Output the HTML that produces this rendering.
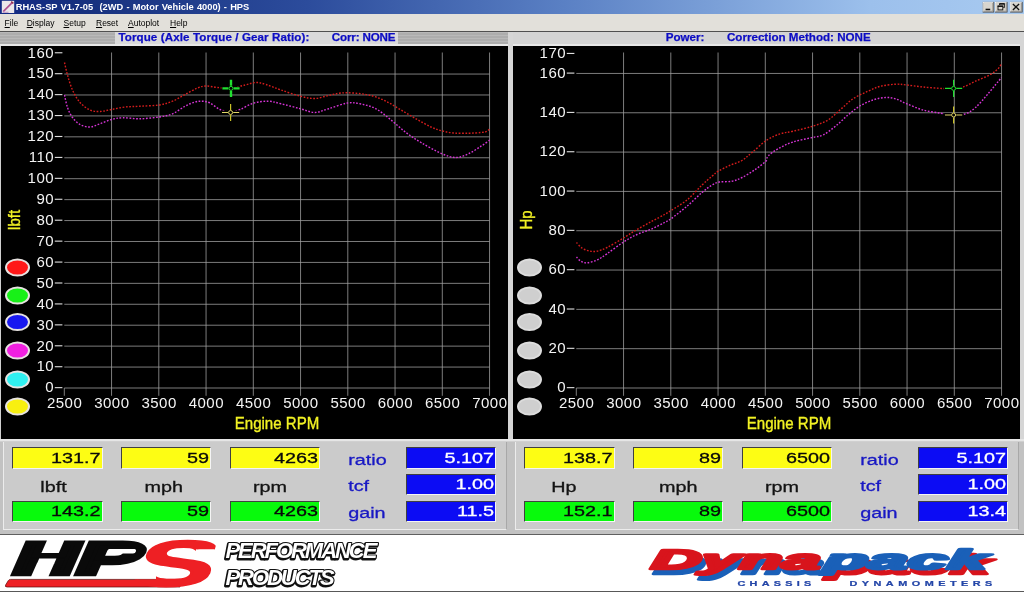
<!DOCTYPE html>
<html lang="en">
<head>
<meta charset="utf-8">
<title>RHAS-SP V1.7-05 (2WD - Motor Vehicle 4000) - HPS</title>
<style>
html,body{margin:0;padding:0}
body{will-change:transform;width:1024px;height:592px;position:relative;overflow:hidden;background:#d0d0d0;font-family:"Liberation Sans",sans-serif}
.abs{position:absolute}
#title{left:0;top:0;width:1024px;height:14px;background:linear-gradient(90deg,#122a84 0%,#16307e 8%,#2c4c9c 30%,#5a80c4 55%,#9cc0ec 85%,#a8caf0 100%)}
#title .t{position:absolute;left:15.7px;top:0;height:14px;line-height:14px;color:#fff;font-weight:bold;font-size:9.3px;white-space:pre;word-spacing:0.6px}
#menu{left:0;top:14px;width:1024px;height:17px;background:#e2e0da}
#menu span{position:absolute;top:1.5px;line-height:15px;font-size:8.5px;color:#000;white-space:pre}
#menu u{text-decoration:underline}
.hdr{top:32px;height:12.3px;background:repeating-linear-gradient(180deg,#b9b9b9 0,#b9b9b9 1.5px,#adadad 1.5px,#adadad 3px)}
.hl{top:32px;height:12.3px;background:#dadada;color:#0c0cc4;-webkit-text-stroke:0.25px #0c0cc4;font-weight:bold;font-size:11.6px;line-height:12.5px;white-space:pre}
.bx{position:absolute;box-sizing:border-box;border-top:1.2px solid #404040;border-left:1.2px solid #404040;border-bottom:1px solid #f4f4f4;border-right:1px solid #f4f4f4;}
.yl{background:#fdfd14}
.gr{background:#08fa0c}
.bl{background:#0c0cf4}
svg text{font-family:"Liberation Sans",sans-serif}
</style>
</head>
<body>
<div id="title" class="abs"><svg class="abs" style="left:0;top:0" width="16" height="14" viewBox="0 0 16 14"><rect x="1.8" y="0.8" width="12.4" height="12.2" fill="#ece8ea"/><path d="M3.2 11.6L12.4 2.4" stroke="#b05090" stroke-width="1.6"/><path d="M2.6 12.3H8.5" stroke="#c0a0c8" stroke-width="1.2"/><path d="M11.2 1.6L13.4 3.4" stroke="#903050" stroke-width="1.4"/></svg><div class="t">RHAS-SP V1.7-05  (2WD - Motor Vehicle 4000) - HPS</div>
<svg class="abs" style="left:980px;top:0" width="44" height="14" viewBox="980 0 44 14">
<g><rect x="982.7" y="1.9" width="11.5" height="10.6" fill="#404040"/><rect x="982.7" y="1.9" width="10.6" height="9.7" fill="#fff"/><rect x="983.5" y="2.7" width="9.8" height="8.9" fill="#86847e"/><rect x="983.5" y="2.7" width="9" height="8.1" fill="#d8d5ce"/><rect x="985.6" y="8.7" width="4.6" height="1.5" fill="#111"/></g>
<g><rect x="995" y="1.9" width="12.5" height="10.6" fill="#404040"/><rect x="995" y="1.9" width="11.6" height="9.7" fill="#fff"/><rect x="995.8" y="2.7" width="10.8" height="8.9" fill="#86847e"/><rect x="995.8" y="2.7" width="10" height="8.1" fill="#d8d5ce"/><path d="M999.6 5V3.6H1004.4V7.6H1003.2" fill="none" stroke="#111" stroke-width="0.9"/><path d="M999.4 4H1004.6" stroke="#111" stroke-width="1.3"/><rect x="998" y="6" width="4.8" height="3.9" fill="none" stroke="#111" stroke-width="0.9"/><path d="M997.6 6.3H1003.2" stroke="#111" stroke-width="1.3"/></g>
<g><rect x="1010.1" y="1.9" width="12.5" height="10.6" fill="#404040"/><rect x="1010.1" y="1.9" width="11.6" height="9.7" fill="#fff"/><rect x="1010.9" y="2.7" width="10.8" height="8.9" fill="#86847e"/><rect x="1010.9" y="2.7" width="10" height="8.1" fill="#d8d5ce"/><path d="M1012.9 3.9L1019.1 9.9M1019.1 3.9L1012.9 9.9" stroke="#111" stroke-width="1.35" fill="none"/></g>
</svg>
</div>
<div id="menu" class="abs"><span style="left:4.6px"><u>F</u>ile</span><span style="left:26.7px"><u>D</u>isplay</span><span style="left:63.5px"><u>S</u>etup</span><span style="left:96px"><u>R</u>eset</span><span style="left:128px"><u>A</u>utoplot</span><span style="left:170px"><u>H</u>elp</span></div>
<div class="abs" style="left:0;top:31px;width:1024px;height:1px;background:#505050"></div>
<div class="abs hdr" style="left:0;width:510px"></div>
<div class="abs hdr" style="left:512px;width:512px;background:#d4d4d4"></div>
<div class="abs hl" style="left:115px;width:283px"><span class="abs" style="left:3.4px;top:-1px;letter-spacing:0.1px">Torque (Axle Torque / Gear Ratio):</span><span class="abs" style="left:216.75px;top:-1px;letter-spacing:-0.15px">Corr: NONE</span></div>
<div class="abs hl" style="left:600px;width:340px;background:none"><span class="abs" style="left:65.75px;top:-1px">Power:</span><span class="abs" style="left:127px;top:-1px">Correction Method: NONE</span></div>
<div class="abs" style="left:0;top:44.3px;width:1024px;height:2px;background:#e8e8e8"></div>
<div class="abs" style="left:1.3px;top:45.9px;width:506.5px;height:393px;background:#000"></div>
<div class="abs" style="left:512.7px;top:45.9px;width:507.1px;height:393px;background:#000"></div>
<div class="abs" style="left:507.8px;top:32px;width:4.9px;height:407px;background:#d6d6d6"></div><div class="abs" style="left:1019.8px;top:32px;width:4.2px;height:407px;background:#d6d6d6"></div><div class="abs" style="left:0;top:438.9px;width:1024px;height:2.6px;background:#e6e6e6"></div>
<svg class="abs" style="left:0;top:0" width="1024" height="592" viewBox="0 0 1024 592"><g stroke="#a0a0a0" stroke-width="0.78"><line x1="64.30" y1="388" x2="64.30" y2="395.8" /><line x1="111.55" y1="52.5" x2="111.55" y2="395.8" /><line x1="158.80" y1="52.5" x2="158.80" y2="395.8" /><line x1="206.05" y1="52.5" x2="206.05" y2="395.8" /><line x1="253.30" y1="52.5" x2="253.30" y2="395.8" /><line x1="300.55" y1="52.5" x2="300.55" y2="395.8" /><line x1="347.80" y1="52.5" x2="347.80" y2="395.8" /><line x1="395.05" y1="52.5" x2="395.05" y2="395.8" /><line x1="442.30" y1="52.5" x2="442.30" y2="395.8" /><line x1="489.55" y1="52.5" x2="489.55" y2="395.8" /><line x1="64.30" y1="388.00" x2="489.55" y2="388.00" /><line x1="64.30" y1="367.07" x2="489.55" y2="367.07" /><line x1="64.30" y1="346.14" x2="489.55" y2="346.14" /><line x1="64.30" y1="325.21" x2="489.55" y2="325.21" /><line x1="64.30" y1="304.28" x2="489.55" y2="304.28" /><line x1="64.30" y1="283.35" x2="489.55" y2="283.35" /><line x1="64.30" y1="262.42" x2="489.55" y2="262.42" /><line x1="64.30" y1="241.49" x2="489.55" y2="241.49" /><line x1="64.30" y1="220.56" x2="489.55" y2="220.56" /><line x1="64.30" y1="199.63" x2="489.55" y2="199.63" /><line x1="64.30" y1="178.70" x2="489.55" y2="178.70" /><line x1="64.30" y1="157.77" x2="489.55" y2="157.77" /><line x1="64.30" y1="136.84" x2="489.55" y2="136.84" /><line x1="64.30" y1="115.91" x2="489.55" y2="115.91" /><line x1="64.30" y1="94.98" x2="489.55" y2="94.98" /><line x1="64.30" y1="74.05" x2="489.55" y2="74.05" /></g><g fill="#f4f4f4" font-size="15px" letter-spacing="0.5px"><text x="54.1" y="392.40" text-anchor="end">0</text><rect x="54.8" y="387.10" width="7.6" height="1.1" fill="#e0e0e0"/><text x="54.1" y="371.47" text-anchor="end">10</text><rect x="54.8" y="366.17" width="7.6" height="1.1" fill="#e0e0e0"/><text x="54.1" y="350.54" text-anchor="end">20</text><rect x="54.8" y="345.24" width="7.6" height="1.1" fill="#e0e0e0"/><text x="54.1" y="329.61" text-anchor="end">30</text><rect x="54.8" y="324.31" width="7.6" height="1.1" fill="#e0e0e0"/><text x="54.1" y="308.68" text-anchor="end">40</text><rect x="54.8" y="303.38" width="7.6" height="1.1" fill="#e0e0e0"/><text x="54.1" y="287.75" text-anchor="end">50</text><rect x="54.8" y="282.45" width="7.6" height="1.1" fill="#e0e0e0"/><text x="54.1" y="266.82" text-anchor="end">60</text><rect x="54.8" y="261.52" width="7.6" height="1.1" fill="#e0e0e0"/><text x="54.1" y="245.89" text-anchor="end">70</text><rect x="54.8" y="240.59" width="7.6" height="1.1" fill="#e0e0e0"/><text x="54.1" y="224.96" text-anchor="end">80</text><rect x="54.8" y="219.66" width="7.6" height="1.1" fill="#e0e0e0"/><text x="54.1" y="204.03" text-anchor="end">90</text><rect x="54.8" y="198.73" width="7.6" height="1.1" fill="#e0e0e0"/><text x="54.1" y="183.10" text-anchor="end">100</text><rect x="54.8" y="177.80" width="7.6" height="1.1" fill="#e0e0e0"/><text x="54.1" y="162.17" text-anchor="end">110</text><rect x="54.8" y="156.87" width="7.6" height="1.1" fill="#e0e0e0"/><text x="54.1" y="141.24" text-anchor="end">120</text><rect x="54.8" y="135.94" width="7.6" height="1.1" fill="#e0e0e0"/><text x="54.1" y="120.31" text-anchor="end">130</text><rect x="54.8" y="115.01" width="7.6" height="1.1" fill="#e0e0e0"/><text x="54.1" y="99.38" text-anchor="end">140</text><rect x="54.8" y="94.08" width="7.6" height="1.1" fill="#e0e0e0"/><text x="54.1" y="78.45" text-anchor="end">150</text><rect x="54.8" y="73.15" width="7.6" height="1.1" fill="#e0e0e0"/><text x="54.1" y="57.52" text-anchor="end">160</text><rect x="54.8" y="52.22" width="7.6" height="1.1" fill="#e0e0e0"/><text x="64.60" y="407.8" text-anchor="middle">2500</text><text x="111.85" y="407.8" text-anchor="middle">3000</text><text x="159.10" y="407.8" text-anchor="middle">3500</text><text x="206.35" y="407.8" text-anchor="middle">4000</text><text x="253.60" y="407.8" text-anchor="middle">4500</text><text x="300.85" y="407.8" text-anchor="middle">5000</text><text x="348.10" y="407.8" text-anchor="middle">5500</text><text x="395.35" y="407.8" text-anchor="middle">6000</text><text x="442.60" y="407.8" text-anchor="middle">6500</text><text x="489.85" y="407.8" text-anchor="middle">7000</text></g><text transform="translate(277 429) scale(0.925 1)" text-anchor="middle" fill="#f2f224" stroke="#f2f224" stroke-width="0.35" font-size="16.3px">Engine RPM</text><text transform="translate(20.2 219.9) rotate(-90) scale(0.92 1)" text-anchor="middle" fill="#f2f224" stroke="#f2f224" stroke-width="0.35" font-size="16.3px">lbft</text><path d="M64.5 62.5C65.0 64.6 66.2 70.4 67.5 75.0C68.8 79.6 70.4 85.4 72.5 90.0C74.6 94.6 77.1 99.2 80.0 102.5C82.9 105.8 86.7 108.5 90.0 110.0C93.3 111.5 96.4 111.6 100.0 111.5C103.6 111.4 107.3 110.2 111.5 109.5C115.7 108.8 120.2 107.5 125.0 107.0C129.8 106.5 134.3 106.6 140.0 106.2C145.7 105.9 153.6 105.8 159.0 105.0C164.4 104.2 168.2 103.0 172.5 101.2C176.8 99.5 180.8 96.7 185.0 94.5C189.2 92.3 194.0 89.4 197.5 88.0C201.0 86.6 202.7 86.1 206.0 86.0C209.3 85.9 213.4 87.1 217.5 87.5C221.6 87.9 226.2 88.7 230.8 88.2C235.3 87.8 240.8 86.0 245.0 85.0C249.2 84.0 252.5 82.6 256.0 82.5C259.5 82.4 261.8 83.2 266.0 84.5C270.2 85.8 275.2 88.0 281.0 90.0C286.8 92.0 294.9 94.8 300.5 96.2C306.1 97.7 310.1 98.6 314.8 98.5C319.4 98.4 324.1 96.4 328.5 95.5C332.9 94.6 336.4 93.4 341.0 93.0C345.6 92.6 351.0 92.8 356.0 93.2C361.0 93.7 366.0 94.2 371.0 95.5C376.0 96.8 381.0 98.8 386.0 101.2C391.0 103.7 396.0 107.1 401.0 110.0C406.0 112.9 411.0 115.9 416.0 118.8C421.0 121.6 426.7 125.0 431.0 127.0C435.3 129.0 438.0 129.8 441.8 130.8C445.5 131.8 449.0 132.6 453.5 133.0C458.0 133.4 463.9 133.3 468.5 133.2C473.1 133.2 477.9 132.8 481.0 132.5C484.1 132.2 485.8 132.0 487.2 131.2C488.8 130.5 489.5 128.5 490.0 128.0" fill="none" stroke="#d41c1c" stroke-width="1.4" stroke-dasharray="1.7 1.6"/><path d="M64.5 95.0C65.0 97.1 66.2 103.8 67.5 107.5C68.8 111.2 70.4 114.7 72.5 117.5C74.6 120.3 77.1 122.9 80.0 124.5C82.9 126.1 86.7 127.1 90.0 127.0C93.3 126.9 96.4 125.0 100.0 123.8C103.6 122.5 107.8 120.5 111.5 119.5C115.2 118.5 117.8 117.9 122.5 117.8C127.2 117.6 133.9 118.9 140.0 118.8C146.1 118.6 153.6 117.8 159.0 117.0C164.4 116.2 168.2 115.5 172.5 113.8C176.8 112.0 181.2 108.2 185.0 106.2C188.8 104.3 192.1 102.8 195.0 102.0C197.9 101.2 200.0 101.1 202.5 101.2C205.0 101.4 207.1 101.6 210.0 103.0C212.9 104.4 216.5 108.0 220.0 109.5C223.5 111.0 227.4 112.0 230.8 112.0C234.1 112.0 236.1 111.0 240.0 109.5C243.9 108.0 249.2 104.4 254.0 103.0C258.8 101.6 264.0 101.1 268.5 101.2C273.0 101.4 275.7 102.5 281.0 103.8C286.3 105.0 294.9 107.3 300.5 108.8C306.1 110.2 310.1 112.5 314.8 112.5C319.4 112.5 323.0 110.3 328.5 108.8C334.0 107.2 342.1 103.8 347.5 103.0C352.9 102.2 356.2 103.0 361.0 104.0C365.8 105.0 371.0 106.1 376.0 108.8C381.0 111.4 386.0 116.0 391.0 120.0C396.0 124.0 401.0 128.8 406.0 132.5C411.0 136.2 415.0 139.0 421.0 142.5C427.0 146.0 435.9 151.2 441.8 153.8C447.6 156.2 451.5 157.5 456.0 157.5C460.5 157.5 464.3 155.6 468.5 153.8C472.7 151.9 477.4 148.5 481.0 146.2C484.6 144.0 488.5 141.0 490.0 140.0" fill="none" stroke="#d634d6" stroke-width="1.4" stroke-dasharray="1.7 1.6"/><rect x="221.5" y="86.4" width="19" height="4" fill="#000"/><g stroke="#20e030" stroke-width="2.4" fill="none"><path d="M222.4 88.4H228.4M233.6 88.4H239.6"/><path stroke="#20e030" d="M231 79.80000000000001V85.80000000000001M231 91.0V97.0"/><circle cx="231" cy="88.4" r="2" stroke-width="1"/></g><rect x="221.1" y="110.5" width="19" height="4" fill="#000"/><g stroke="#e0d468" stroke-width="1.2" fill="none"><path d="M222.0 112.5H228.0M233.2 112.5H239.2"/><path stroke="#c8c028" d="M230.6 103.9V109.9M230.6 115.1V121.1"/><circle cx="230.6" cy="112.5" r="2" stroke-width="1"/></g><ellipse cx="17.5" cy="267.5" rx="11.5" ry="8.1" fill="#ff1818" stroke="#e6e2e0" stroke-width="2"/><ellipse cx="17.5" cy="295.5" rx="11.5" ry="8.1" fill="#18f018" stroke="#e6e2e0" stroke-width="2"/><ellipse cx="17.5" cy="322" rx="11.5" ry="8.1" fill="#1818f0" stroke="#e6e2e0" stroke-width="2"/><ellipse cx="17.5" cy="350.5" rx="11.5" ry="8.1" fill="#f020e0" stroke="#e6e2e0" stroke-width="2"/><ellipse cx="17.5" cy="379.5" rx="11.5" ry="8.1" fill="#30f0f0" stroke="#e6e2e0" stroke-width="2"/><ellipse cx="17.5" cy="406.5" rx="11.5" ry="8.1" fill="#f8f010" stroke="#e6e2e0" stroke-width="2"/><g stroke="#a0a0a0" stroke-width="0.78"><line x1="576.30" y1="388" x2="576.30" y2="395.8" /><line x1="623.55" y1="52.5" x2="623.55" y2="395.8" /><line x1="670.80" y1="52.5" x2="670.80" y2="395.8" /><line x1="718.05" y1="52.5" x2="718.05" y2="395.8" /><line x1="765.30" y1="52.5" x2="765.30" y2="395.8" /><line x1="812.55" y1="52.5" x2="812.55" y2="395.8" /><line x1="859.80" y1="52.5" x2="859.80" y2="395.8" /><line x1="907.05" y1="52.5" x2="907.05" y2="395.8" /><line x1="954.30" y1="52.5" x2="954.30" y2="395.8" /><line x1="1001.55" y1="52.5" x2="1001.55" y2="395.8" /><line x1="576.30" y1="388.00" x2="1001.55" y2="388.00" /><line x1="576.30" y1="348.68" x2="1001.55" y2="348.68" /><line x1="576.30" y1="309.36" x2="1001.55" y2="309.36" /><line x1="576.30" y1="270.04" x2="1001.55" y2="270.04" /><line x1="576.30" y1="230.72" x2="1001.55" y2="230.72" /><line x1="576.30" y1="191.41" x2="1001.55" y2="191.41" /><line x1="576.30" y1="152.09" x2="1001.55" y2="152.09" /><line x1="576.30" y1="112.77" x2="1001.55" y2="112.77" /><line x1="576.30" y1="73.45" x2="1001.55" y2="73.45" /></g><g fill="#f4f4f4" font-size="15px" letter-spacing="0.5px"><text x="566.1" y="392.40" text-anchor="end">0</text><rect x="566.8" y="387.10" width="7.6" height="1.1" fill="#e0e0e0"/><text x="566.1" y="353.08" text-anchor="end">20</text><rect x="566.8" y="347.78" width="7.6" height="1.1" fill="#e0e0e0"/><text x="566.1" y="313.76" text-anchor="end">40</text><rect x="566.8" y="308.46" width="7.6" height="1.1" fill="#e0e0e0"/><text x="566.1" y="274.44" text-anchor="end">60</text><rect x="566.8" y="269.14" width="7.6" height="1.1" fill="#e0e0e0"/><text x="566.1" y="235.12" text-anchor="end">80</text><rect x="566.8" y="229.82" width="7.6" height="1.1" fill="#e0e0e0"/><text x="566.1" y="195.81" text-anchor="end">100</text><rect x="566.8" y="190.51" width="7.6" height="1.1" fill="#e0e0e0"/><text x="566.1" y="156.49" text-anchor="end">120</text><rect x="566.8" y="151.19" width="7.6" height="1.1" fill="#e0e0e0"/><text x="566.1" y="117.17" text-anchor="end">140</text><rect x="566.8" y="111.87" width="7.6" height="1.1" fill="#e0e0e0"/><text x="566.1" y="77.85" text-anchor="end">160</text><rect x="566.8" y="72.55" width="7.6" height="1.1" fill="#e0e0e0"/><text x="566.1" y="58.19" text-anchor="end">170</text><rect x="566.8" y="52.89" width="7.6" height="1.1" fill="#e0e0e0"/><text x="576.60" y="407.8" text-anchor="middle">2500</text><text x="623.85" y="407.8" text-anchor="middle">3000</text><text x="671.10" y="407.8" text-anchor="middle">3500</text><text x="718.35" y="407.8" text-anchor="middle">4000</text><text x="765.60" y="407.8" text-anchor="middle">4500</text><text x="812.85" y="407.8" text-anchor="middle">5000</text><text x="860.10" y="407.8" text-anchor="middle">5500</text><text x="907.35" y="407.8" text-anchor="middle">6000</text><text x="954.60" y="407.8" text-anchor="middle">6500</text><text x="1001.85" y="407.8" text-anchor="middle">7000</text></g><text transform="translate(789 429) scale(0.925 1)" text-anchor="middle" fill="#f2f224" stroke="#f2f224" stroke-width="0.35" font-size="16.3px">Engine RPM</text><text transform="translate(532.2 219.9) rotate(-90) scale(0.92 1)" text-anchor="middle" fill="#f2f224" stroke="#f2f224" stroke-width="0.35" font-size="16.3px">Hp</text><path d="M576.5 242.5C577.4 243.4 579.8 246.6 582.0 248.0C584.2 249.4 587.0 250.5 589.5 251.0C592.0 251.5 594.1 251.8 597.0 251.2C599.9 250.7 602.6 249.7 607.0 247.5C611.4 245.3 618.5 241.0 623.5 238.0C628.5 235.0 632.2 232.3 637.0 229.5C641.8 226.7 647.4 223.8 652.0 221.2C656.6 218.8 661.3 216.3 664.5 214.5C667.7 212.7 667.2 212.9 671.0 210.5C674.8 208.1 681.8 204.2 687.0 200.0C692.2 195.8 697.8 189.0 702.0 185.0C706.2 181.0 709.3 178.5 712.0 176.2C714.7 174.0 715.3 173.0 718.2 171.2C721.2 169.5 725.5 167.3 729.5 165.5C733.5 163.7 738.2 162.7 742.0 160.5C745.8 158.3 747.8 155.9 752.0 152.5C756.2 149.1 762.2 143.1 767.0 140.0C771.8 136.9 776.2 135.2 780.5 133.8C784.8 132.3 787.7 132.5 793.0 131.2C798.3 130.0 806.7 128.1 812.5 126.2C818.3 124.4 823.3 122.8 828.0 120.0C832.7 117.2 836.3 113.0 840.5 109.5C844.7 106.0 848.4 101.8 853.0 98.8C857.6 95.7 863.4 93.3 868.0 91.2C872.6 89.2 875.9 87.4 880.5 86.2C885.1 85.1 891.1 84.5 895.5 84.2C899.9 84.0 902.2 84.5 906.8 85.0C911.3 85.5 917.0 86.4 923.0 87.0C929.0 87.6 937.9 88.3 943.0 88.5C948.1 88.7 950.4 88.5 953.8 88.2C957.1 88.0 959.4 88.2 963.0 87.0C966.6 85.8 970.9 83.3 975.5 81.2C980.1 79.2 986.8 76.6 990.5 74.5C994.2 72.4 996.2 70.5 998.0 68.8C999.8 67.0 1000.9 64.6 1001.5 63.8" fill="none" stroke="#d41c1c" stroke-width="1.4" stroke-dasharray="1.7 1.6"/><path d="M576.5 257.0C577.2 257.7 579.0 260.3 580.8 261.2C582.5 262.2 584.3 263.0 587.0 262.8C589.7 262.5 593.7 261.5 597.0 260.0C600.3 258.5 602.6 256.8 607.0 253.8C611.4 250.8 618.5 245.2 623.5 242.0C628.5 238.8 632.2 236.7 637.0 234.5C641.8 232.3 647.4 230.8 652.0 228.8C656.6 226.8 661.3 224.2 664.5 222.5C667.7 220.8 667.2 221.5 671.0 218.8C674.8 216.0 681.8 210.6 687.0 206.2C692.2 201.9 697.8 196.0 702.0 192.5C706.2 189.0 709.1 186.8 712.0 185.0C714.9 183.2 716.2 182.6 719.5 182.0C722.8 181.4 728.2 182.0 732.0 181.2C735.8 180.5 738.2 179.4 742.0 177.5C745.8 175.6 750.5 172.7 754.5 170.0C758.5 167.3 763.5 163.5 765.8 161.2C768.0 159.0 766.0 158.3 768.0 156.2C770.0 154.2 773.8 151.1 778.0 148.8C782.2 146.4 787.2 143.9 793.0 142.0C798.8 140.1 807.5 138.7 812.5 137.5C817.5 136.3 819.2 136.9 823.0 135.0C826.8 133.1 831.3 129.6 835.5 126.2C839.7 122.9 844.0 118.3 848.0 115.0C852.0 111.7 855.3 108.8 859.5 106.2C863.7 103.8 868.7 101.5 873.0 100.0C877.3 98.5 881.8 97.7 885.5 97.5C889.2 97.3 892.0 97.7 895.5 98.8C899.0 99.8 902.2 101.9 906.8 103.8C911.3 105.6 917.4 108.4 923.0 110.0C928.6 111.6 935.4 112.4 940.5 113.2C945.6 114.1 949.6 114.9 953.8 115.0C957.9 115.1 961.9 115.0 965.5 113.8C969.1 112.5 971.8 110.8 975.5 107.5C979.2 104.2 983.7 98.8 988.0 93.8C992.3 88.8 999.2 80.2 1001.5 77.5" fill="none" stroke="#d634d6" stroke-width="1.4" stroke-dasharray="1.7 1.6"/><rect x="944.1" y="86.4" width="19" height="4" fill="#000"/><g stroke="#20e030" stroke-width="1.2" fill="none"><path d="M945.0 88.4H951.0M956.2 88.4H962.2"/><path stroke="#20e030" d="M953.6 79.80000000000001V85.80000000000001M953.6 91.0V97.0"/><circle cx="953.6" cy="88.4" r="2" stroke-width="1"/></g><rect x="944.1" y="113" width="19" height="4" fill="#000"/><g stroke="#e0d468" stroke-width="1.2" fill="none"><path d="M945.0 115H951.0M956.2 115H962.2"/><path stroke="#c8c028" d="M953.6 106.4V112.4M953.6 117.6V123.6"/><circle cx="953.6" cy="115" r="2" stroke-width="1"/></g><ellipse cx="529.5" cy="267.5" rx="11.5" ry="8.1" fill="#cfcfcf" stroke="#dcdcdc" stroke-width="2"/><ellipse cx="529.5" cy="295.5" rx="11.5" ry="8.1" fill="#cfcfcf" stroke="#dcdcdc" stroke-width="2"/><ellipse cx="529.5" cy="322" rx="11.5" ry="8.1" fill="#cfcfcf" stroke="#dcdcdc" stroke-width="2"/><ellipse cx="529.5" cy="350.5" rx="11.5" ry="8.1" fill="#cfcfcf" stroke="#dcdcdc" stroke-width="2"/><ellipse cx="529.5" cy="379.5" rx="11.5" ry="8.1" fill="#cfcfcf" stroke="#dcdcdc" stroke-width="2"/><ellipse cx="529.5" cy="406.5" rx="11.5" ry="8.1" fill="#cfcfcf" stroke="#dcdcdc" stroke-width="2"/></svg>
<div class="abs" style="left:0;top:441.5px;width:512px;height:92.5px;background:#c2c2c2"></div><div class="abs" style="left:3.3px;top:441.5px;width:503.7px;height:88.8px;box-sizing:border-box;background:#cbcbcb;border:1px solid #ececec;border-right-color:#a8a8a8;border-top:none"></div>
<div class="abs" style="left:512px;top:441.5px;width:512px;height:92.5px;background:#c2c2c2"></div><div class="abs" style="left:515.3px;top:441.5px;width:503.7px;height:88.8px;box-sizing:border-box;background:#cbcbcb;border:1px solid #ececec;border-right-color:#a8a8a8;border-top:none"></div>
<div class="bx yl" style="left:12px;top:447.3px;width:90.5px;height:21.5px"></div><div class="bx gr" style="left:12px;top:500.5px;width:90.5px;height:21.8px"></div><div class="bx yl" style="left:120.5px;top:447.3px;width:90.5px;height:21.5px"></div><div class="bx gr" style="left:120.5px;top:500.5px;width:90.5px;height:21.8px"></div><div class="bx yl" style="left:229.5px;top:447.3px;width:90.5px;height:21.5px"></div><div class="bx gr" style="left:229.5px;top:500.5px;width:90.5px;height:21.8px"></div><div class="bx bl" style="left:405.5px;top:447.3px;width:90.7px;height:21.6px"></div><div class="bx bl" style="left:405.5px;top:473.6px;width:90.7px;height:21.6px"></div><div class="bx bl" style="left:405.5px;top:500.5px;width:90.7px;height:21.6px"></div><div class="bx yl" style="left:524px;top:447.3px;width:90.5px;height:21.5px"></div><div class="bx gr" style="left:524px;top:500.5px;width:90.5px;height:21.8px"></div><div class="bx yl" style="left:632.5px;top:447.3px;width:90.5px;height:21.5px"></div><div class="bx gr" style="left:632.5px;top:500.5px;width:90.5px;height:21.8px"></div><div class="bx yl" style="left:741.5px;top:447.3px;width:90.5px;height:21.5px"></div><div class="bx gr" style="left:741.5px;top:500.5px;width:90.5px;height:21.8px"></div><div class="bx bl" style="left:917.5px;top:447.3px;width:90.7px;height:21.6px"></div><div class="bx bl" style="left:917.5px;top:473.6px;width:90.7px;height:21.6px"></div><div class="bx bl" style="left:917.5px;top:500.5px;width:90.7px;height:21.6px"></div><svg class="abs" style="left:0;top:440px" width="1024" height="95" viewBox="0 440 1024 95" font-size="15.0px"><text transform="translate(100.4 462.9) scale(1.32 1)" text-anchor="end" fill="#0a0a0a" stroke="#0a0a0a" stroke-width="0.3">131.7</text><text transform="translate(100.4 516.1) scale(1.32 1)" text-anchor="end" fill="#0a0a0a" stroke="#0a0a0a" stroke-width="0.3">143.2</text><text transform="translate(208.9 462.9) scale(1.32 1)" text-anchor="end" fill="#0a0a0a" stroke="#0a0a0a" stroke-width="0.3">59</text><text transform="translate(208.9 516.1) scale(1.32 1)" text-anchor="end" fill="#0a0a0a" stroke="#0a0a0a" stroke-width="0.3">59</text><text transform="translate(317.9 462.9) scale(1.32 1)" text-anchor="end" fill="#0a0a0a" stroke="#0a0a0a" stroke-width="0.3">4263</text><text transform="translate(317.9 516.1) scale(1.32 1)" text-anchor="end" fill="#0a0a0a" stroke="#0a0a0a" stroke-width="0.3">4263</text><text transform="translate(40.3 491.85) scale(1.32 1)" fill="#141414" stroke="#141414" stroke-width="0.3">lbft</text><text transform="translate(144.4 491.85) scale(1.32 1)" fill="#141414" stroke="#141414" stroke-width="0.3">mph</text><text transform="translate(253.0 491.85) scale(1.32 1)" fill="#141414" stroke="#141414" stroke-width="0.3">rpm</text><text transform="translate(494.1 462.9) scale(1.32 1)" text-anchor="end" fill="#fff" stroke="#fff" stroke-width="0.3">5.107</text><text transform="translate(348.2 464.6) scale(1.32 1)" fill="#1818c4" stroke="#1818c4" stroke-width="0.3">ratio</text><text transform="translate(494.1 489.2) scale(1.32 1)" text-anchor="end" fill="#fff" stroke="#fff" stroke-width="0.3">1.00</text><text transform="translate(348.2 491) scale(1.32 1)" fill="#1818c4" stroke="#1818c4" stroke-width="0.3">tcf</text><text transform="translate(494.1 516.1) scale(1.32 1)" text-anchor="end" fill="#fff" stroke="#fff" stroke-width="0.3">11.5</text><text transform="translate(348.2 517.6) scale(1.32 1)" fill="#1818c4" stroke="#1818c4" stroke-width="0.3">gain</text><text transform="translate(612.4 462.9) scale(1.32 1)" text-anchor="end" fill="#0a0a0a" stroke="#0a0a0a" stroke-width="0.3">138.7</text><text transform="translate(612.4 516.1) scale(1.32 1)" text-anchor="end" fill="#0a0a0a" stroke="#0a0a0a" stroke-width="0.3">152.1</text><text transform="translate(720.9 462.9) scale(1.32 1)" text-anchor="end" fill="#0a0a0a" stroke="#0a0a0a" stroke-width="0.3">89</text><text transform="translate(720.9 516.1) scale(1.32 1)" text-anchor="end" fill="#0a0a0a" stroke="#0a0a0a" stroke-width="0.3">89</text><text transform="translate(829.9 462.9) scale(1.32 1)" text-anchor="end" fill="#0a0a0a" stroke="#0a0a0a" stroke-width="0.3">6500</text><text transform="translate(829.9 516.1) scale(1.32 1)" text-anchor="end" fill="#0a0a0a" stroke="#0a0a0a" stroke-width="0.3">6500</text><text transform="translate(551.2 491.85) scale(1.32 1)" fill="#141414" stroke="#141414" stroke-width="0.3">Hp</text><text transform="translate(658.9 491.85) scale(1.32 1)" fill="#141414" stroke="#141414" stroke-width="0.3">mph</text><text transform="translate(765.0 491.85) scale(1.32 1)" fill="#141414" stroke="#141414" stroke-width="0.3">rpm</text><text transform="translate(1006.1 462.9) scale(1.32 1)" text-anchor="end" fill="#fff" stroke="#fff" stroke-width="0.3">5.107</text><text transform="translate(860.2 464.6) scale(1.32 1)" fill="#1818c4" stroke="#1818c4" stroke-width="0.3">ratio</text><text transform="translate(1006.1 489.2) scale(1.32 1)" text-anchor="end" fill="#fff" stroke="#fff" stroke-width="0.3">1.00</text><text transform="translate(860.2 491) scale(1.32 1)" fill="#1818c4" stroke="#1818c4" stroke-width="0.3">tcf</text><text transform="translate(1006.1 516.1) scale(1.32 1)" text-anchor="end" fill="#fff" stroke="#fff" stroke-width="0.3">13.4</text><text transform="translate(860.2 517.6) scale(1.32 1)" fill="#1818c4" stroke="#1818c4" stroke-width="0.3">gain</text></svg>
<div class="abs" style="left:0;top:534px;width:1024px;height:1px;background:#606060"></div>
<div class="abs" style="left:0;top:535px;width:1024px;height:57px;background:#585858"></div><div class="abs" style="left:0;top:535px;width:1024px;height:55.6px;background:#fff"></div>
<svg class="abs" style="left:0;top:535px" width="1024" height="57" viewBox="0 535 1024 57"><defs><clipPath id="cs"><path d="M130 535H219L214.8 549.2H196V558H230V592H130V579.4H156V566H130Z"/></clipPath></defs><path d="M10.5 579.4 H180 V587 H7.2 Q4.6 587 5.6 585 L8.3 580.6 Q9 579.4 10.5 579.4Z" fill="#ee2024" stroke="#5a0a0a" stroke-width="0.7"/><g font-family="'Liberation Sans',sans-serif" font-weight="bold" stroke-linejoin="miter" stroke-miterlimit="8"><text transform="matrix(2.03 0 -0.4664 1.06 9.4 573.5)" font-size="42.8px" fill="#0a0a0a" stroke="#0a0a0a" stroke-width="4.3">H</text><text transform="matrix(2.2 0 -0.4664 1.06 72.6 573.5)" font-size="42.8px" fill="#0a0a0a" stroke="#0a0a0a" stroke-width="4.3">P</text><path d="M39.2 558.4H56.4L54.2 563.4H37Z" fill="#fff"/><path d="M108.6 548.9H134.6Q136.6 549 136 551.2Q135.4 553.5 133 553.6H106.6Z" fill="#fff"/><g clip-path="url(#cs)"><text transform="matrix(1.86 0 -0.4400 0.985 126 586)" font-size="66px" fill="#ee2024" stroke="#ee2024" stroke-width="1.6">S</text></g></g><text x="225.5" y="558.6999999999999" font-family="'Liberation Sans',sans-serif" font-weight="bold" font-style="italic" font-size="22px" letter-spacing="-2.05px" fill="#111" stroke="#111" stroke-width="2.8" stroke-linejoin="round" transform="translate(-0.6 0)">PERFORMANCE</text><text x="225.5" y="557.8" font-family="'Liberation Sans',sans-serif" font-weight="bold" font-style="italic" font-size="22px" letter-spacing="-2.05px" fill="#fff" stroke="#111" stroke-width="2.2" stroke-linejoin="round" paint-order="stroke">PERFORMANCE</text><text x="225.5" y="585.6" font-family="'Liberation Sans',sans-serif" font-weight="bold" font-style="italic" font-size="22px" letter-spacing="-2.05px" fill="#111" stroke="#111" stroke-width="2.8" stroke-linejoin="round" transform="translate(-0.6 0)">PRODUCTS</text><text x="225.5" y="584.7" font-family="'Liberation Sans',sans-serif" font-weight="bold" font-style="italic" font-size="22px" letter-spacing="-2.05px" fill="#fff" stroke="#111" stroke-width="2.2" stroke-linejoin="round" paint-order="stroke">PRODUCTS</text><text transform="matrix(2.5 0 -0.14 1 653.7 573.8)" font-family="'Liberation Sans',sans-serif" font-weight="bold" font-style="italic" font-size="27.4px" stroke-linejoin="round" stroke-width="2.7" letter-spacing="0.2px" fill="#1a60b8" stroke="#1a60b8">Dyna</text><rect x="668" y="554" width="20" height="11" fill="#fff"/><rect x="794" y="563" width="7" height="3" fill="#fff"/><text transform="matrix(2.5 0 -0.14 1 650.5 569.2)" font-family="'Liberation Sans',sans-serif" font-weight="bold" font-style="italic" font-size="27.4px" stroke-linejoin="round" stroke-width="2.7" letter-spacing="0.2px" fill="#d8141c" stroke="#d8141c">Dyna</text><text transform="matrix(2.58 0 -0.14 1 826.7 573.8)" font-family="'Liberation Sans',sans-serif" font-weight="bold" font-style="italic" font-size="27.4px" stroke-linejoin="round" stroke-width="2.7" letter-spacing="0.2px" fill="#d8141c" stroke="#d8141c">pack</text><rect x="841" y="557" width="12" height="9" fill="#fff"/><rect x="887" y="557" width="5" height="3" fill="#fff"/><rect x="923" y="557" width="28" height="9" fill="#fff"/><rect x="903" y="562" width="5" height="5" fill="#fff"/><rect x="881" y="563" width="7" height="3" fill="#fff"/><text transform="matrix(2.58 0 -0.14 1 823.5 569.2)" font-family="'Liberation Sans',sans-serif" font-weight="bold" font-style="italic" font-size="27.4px" stroke-linejoin="round" stroke-width="2.7" letter-spacing="0.2px" fill="#1a60b8" stroke="#1a60b8">pack</text><text transform="matrix(1.45 0 0 1 737.4 585.6)" font-family="'Liberation Sans',sans-serif" font-weight="bold" font-size="7.5px" fill="#2446a8" stroke="#2446a8" stroke-width="0.25" letter-spacing="2.95px">CHASSIS</text><text transform="matrix(1.45 0 0 1 849.4 585.6)" font-family="'Liberation Sans',sans-serif" font-weight="bold" font-size="7.5px" fill="#2446a8" stroke="#2446a8" stroke-width="0.25" letter-spacing="3.1px">DYNAMOMETERS</text></svg>
</body>
</html>
